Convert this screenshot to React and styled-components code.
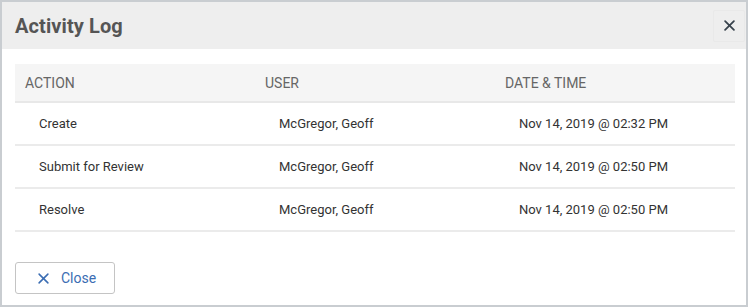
import React from 'react'
import styled, { createGlobalStyle } from 'styled-components'

const Global = createGlobalStyle`
  html, body { margin: 0; padding: 0; background: #fff; }
  body { font-family: Roboto, "Liberation Sans", Arial, sans-serif; }
`

const Dialog = styled.div`
  box-sizing: border-box;
  width: 748px;
  height: 307px;
  border: 2px solid #c9cdd1;
  background: #fff;
  display: flex;
  flex-direction: column;
`

const Header = styled.div`
  height: 47px;
  background: #eeeeee;
  display: flex;
  align-items: center;
  justify-content: space-between;
  padding: 0 1px 0 13px;
`

const Title = styled.h2`
  margin: 0;
  font-size: 20px;
  font-weight: 700;
  color: #555;
  letter-spacing: 0.1px;
`

const IconButton = styled.button`
  width: 32px;
  height: 32px;
  display: flex;
  align-items: center;
  justify-content: center;
  background: #eeeeee;
  border: 1px solid #e9e9e9;
  border-radius: 2px;
  padding: 0;
  color: #37424c;
  cursor: pointer;
`

const Body = styled.div`
  padding: 15px 11px 0 13px;
  flex: 1;
`

const Table = styled.div`
  display: grid;
  grid-template-columns: 240px 240px 240px;
`

const HeadCell = styled.div`
  height: 37px;
  background: #f5f5f5;
  border-bottom: 2px solid #e8e8e8;
  display: flex;
  align-items: center;
  padding-left: 10px;
  font-size: 14px;
  color: #666;
`

const Cell = styled.div`
  height: 41px;
  border-bottom: 2px solid #ebebeb;
  display: flex;
  align-items: center;
  padding-left: 24px;
  font-size: 13px;
  color: #333;
`

const Footer = styled.div`
  padding: 0 0 11px 13px;
`

const CloseButton = styled.button`
  box-sizing: border-box;
  width: 100px;
  height: 32px;
  border: 1px solid #c4c4c4;
  border-radius: 3px;
  background: #fff;
  display: flex;
  align-items: center;
  gap: 12px;
  padding: 0 0 0 22px;
  font-family: inherit;
  font-size: 14px;
  color: #3b6db3;
  cursor: pointer;
`

const XIcon = ({ size = 10, width = 1.6 }) => (
  <svg width={size} height={size} viewBox="0 0 10 10">
    <path d="M1 1L9 9M9 1L1 9" stroke="currentColor" strokeWidth={width} strokeLinecap="round" />
  </svg>
)

const rows = [
  ['Create', 'McGregor, Geoff', 'Nov 14, 2019 @ 02:32 PM'],
  ['Submit for Review', 'McGregor, Geoff', 'Nov 14, 2019 @ 02:50 PM'],
  ['Resolve', 'McGregor, Geoff', 'Nov 14, 2019 @ 02:50 PM'],
]

export default function App() {
  return (
    <>
      <Global />
      <Dialog>
        <Header>
          <Title>Activity Log</Title>
          <IconButton aria-label="close"><XIcon size={11} /></IconButton>
        </Header>
        <Body>
          <Table>
            <HeadCell>ACTION</HeadCell>
            <HeadCell>USER</HeadCell>
            <HeadCell>DATE &amp; TIME</HeadCell>
            {rows.map((r, i) => r.map((c, j) => <Cell key={i + '-' + j}>{c}</Cell>))}
          </Table>
        </Body>
        <Footer>
          <CloseButton><XIcon size={11} width={1.4} />Close</CloseButton>
        </Footer>
      </Dialog>
    </>
  )
}
